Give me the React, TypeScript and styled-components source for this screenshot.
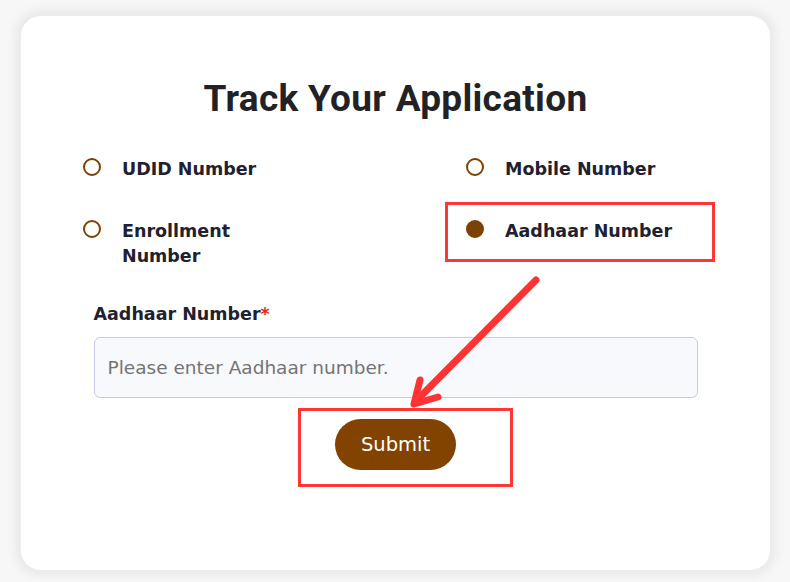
import React from 'react';
import styled, { createGlobalStyle } from 'styled-components';

const GlobalStyle = createGlobalStyle`
  html, body {
    margin: 0;
    padding: 0;
    background: #f7f7f7;
  }
  body {
    font-family: "DejaVu Sans", "Noto Sans", sans-serif;
  }
`;

const Page = styled.div`
  width: 790px;
  height: 582px;
  box-sizing: border-box;
  padding: 16px 20px 12px 21px;
`;

const Card = styled.div`
  position: relative;
  height: 100%;
  background: #ffffff;
  border-radius: 20px;
  box-shadow: 0 0 0 3px #ececec, 0 0 10px 7px rgba(0, 0, 0, 0.05);
  display: flex;
  flex-direction: column;
  align-items: center;
  padding-top: 62px;
  box-sizing: border-box;
`;

const Title = styled.h1`
  margin: 0;
  font-family: Roboto, "Liberation Sans", sans-serif;
  font-weight: 700;
  font-size: 37px;
  line-height: 42px;
  letter-spacing: 0.3px;
  color: #222226;
`;

const OptionsGrid = styled.div`
  align-self: flex-start;
  margin: 37px 0 0 62px;
  display: grid;
  grid-template-columns: 383px 260px;
  row-gap: 37px;
`;

const Option = styled.label<{ $highlight?: boolean }>`
  display: flex;
  align-self: start;
  align-items: flex-start;
  gap: 21px;
  cursor: pointer;
  ${({ $highlight }) =>
    $highlight &&
    `
    box-sizing: border-box;
    width: 270px;
    margin: -17px 0 -17px -21px;
    padding: 14px 0 15px 18px;
    border: 3px solid #ff3636;
  `}
`;

const Radio = styled.span<{ $checked?: boolean }>`
  flex: none;
  width: 18px;
  height: 18px;
  margin-top: 1px;
  box-sizing: border-box;
  border-radius: 50%;
  border: 2px solid #7c4104;
  background: ${({ $checked }) => ($checked ? '#7c4104' : 'transparent')};
`;

const OptionText = styled.span<{ $narrow?: boolean }>`
  max-width: ${({ $narrow }) => ($narrow ? '150px' : 'none')};
  white-space: ${({ $narrow }) => ($narrow ? 'normal' : 'nowrap')};
  font-size: 17.5px;
  font-weight: 700;
  line-height: 25px;
  color: #1f2130;
`;

const Form = styled.div`
  width: 604px;
  margin-top: 33px;
  display: flex;
  flex-direction: column;
`;

const FieldLabel = styled.div`
  font-size: 17.5px;
  font-weight: 700;
  line-height: 24px;
  color: #1f2130;
`;

const Required = styled.span`
  color: #e8261c;
`;

const Input = styled.input`
  margin-top: 11px;
  height: 61px;
  box-sizing: border-box;
  border: 1px solid #c6cbec;
  border-radius: 6px;
  background: #f8f9fc;
  padding: 0 13px;
  font-family: "DejaVu Sans", "Noto Sans", sans-serif;
  font-size: 18.5px;
  color: #333;
  outline: none;
  &::placeholder {
    color: #747474;
  }
`;

const SubmitFrame = styled.div`
  align-self: center;
  margin: 10px 0 0 20px;
  padding: 8px 54px 14px 34px;
  border: 3px solid #ff3636;
`;

const SubmitButton = styled.button`
  display: block;
  width: 121px;
  height: 51px;
  padding: 0;
  border: none;
  border-radius: 26px;
  background: #824300;
  color: #ffffff;
  font-family: "DejaVu Sans", "Noto Sans", sans-serif;
  font-size: 19.5px;
  font-weight: 500;
  cursor: pointer;
`;

const Arrow = styled.svg`
  position: absolute;
  left: 379px;
  top: 254px;
  overflow: visible;
  pointer-events: none;
`;

const options = [
  { label: 'UDID Number' },
  { label: 'Mobile Number' },
  { label: 'Enrollment Number', narrow: true },
  { label: 'Aadhaar Number', checked: true },
];

export default function App() {
  return (
    <>
      <GlobalStyle />
      <Page>
        <Card>
          <Title>Track Your Application</Title>
          <OptionsGrid>
            {options.map((o) => (
              <Option key={o.label} $highlight={o.checked}>
                <Radio $checked={o.checked} />
                <OptionText $narrow={o.narrow}>{o.label}</OptionText>
              </Option>
            ))}
          </OptionsGrid>
          <Form>
            <FieldLabel>
              Aadhaar Number<Required>*</Required>
            </FieldLabel>
            <Input placeholder="Please enter Aadhaar number." />
            <SubmitFrame>
              <SubmitButton>Submit</SubmitButton>
            </SubmitFrame>
          </Form>
          <Arrow width="150" height="140" viewBox="0 0 150 140">
            <g stroke="#ff3333" strokeWidth="7" strokeLinecap="round" strokeLinejoin="round" fill="none">
              <path d="M136 10 L15 132" />
              <path d="M20 110 L14 134 L38 127" />
            </g>
          </Arrow>
        </Card>
      </Page>
    </>
  );
}
